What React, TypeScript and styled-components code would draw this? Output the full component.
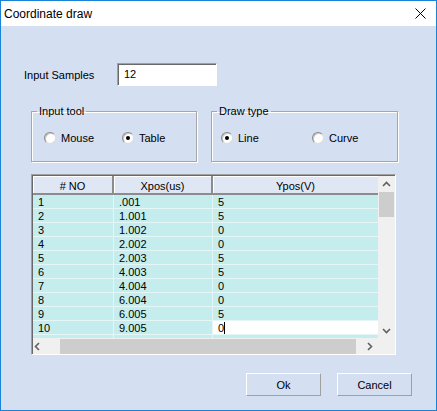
import styled, { createGlobalStyle } from "styled-components";

const GlobalStyle = createGlobalStyle`
  html, body {
    margin: 0;
    padding: 0;
    background: #ffffff;
  }
  * {
    box-sizing: border-box;
  }
`;

const rows: [string, string, string][] = [
  ["1", ".001", "5"],
  ["2", "1.001", "5"],
  ["3", "1.002", "0"],
  ["4", "2.002", "0"],
  ["5", "2.003", "5"],
  ["6", "4.003", "5"],
  ["7", "4.004", "0"],
  ["8", "6.004", "0"],
  ["9", "6.005", "5"],
  ["10", "9.005", "0"],
  ["", "", ""],
];

const Window = styled.div`
  width: 437px;
  height: 411px;
  border: 1px solid #1883d7;
  background: #d4dff1;
  display: flex;
  flex-direction: column;
  font-family: "Liberation Sans", Arial, sans-serif;
  font-size: 11px;
  color: #000;
`;

const TitleBar = styled.div`
  height: 25px;
  background: #ffffff;
  display: flex;
  align-items: center;
  justify-content: space-between;
  padding: 0 10px 0 3px;
  font-size: 12px;
`;

const Body = styled.div`
  flex: 1;
  display: flex;
  flex-direction: column;
  padding: 37px 0 0 0;
`;

const SampleRow = styled.div`
  display: flex;
  align-items: center;
  padding-left: 23px;
  height: 23px;
`;

const SampleLabel = styled.span`
  width: 93px;
`;

const TextBox = styled.div`
  width: 100px;
  height: 23px;
  background: #fff;
  border-top: 1px solid #a0a0a0;
  border-left: 1px solid #a0a0a0;
  border-right: 1px solid #fff;
  border-bottom: 1px solid #fff;
  box-shadow: inset 1px 1px 0 #696969;
  padding: 4px 0 0 6px;
`;

const GroupRow = styled.div`
  display: flex;
  margin-top: 19px;
  padding-left: 30px;
  gap: 14px;
`;

const Group = styled.fieldset<{ $w: number }>`
  width: ${(p) => p.$w}px;
  height: 57px;
  margin: 0;
  padding: 0 0 3px 0;
  border: 1px solid #a6a6a6;
  box-shadow: inset 1px 1px 0 #fff, 1px 1px 0 #fff;
  display: flex;
  align-items: center;
`;

const Legend = styled.legend`
  margin-left: 5px;
  padding: 0 2px;
  font-size: 11px;
`;

const RadioLine = styled.div<{ $pad: number }>`
  display: flex;
  align-items: center;
  padding-left: ${(p) => p.$pad}px;
`;

const RadioItem = styled.label<{ $w: number }>`
  display: flex;
  align-items: center;
  width: ${(p) => p.$w}px;
`;

const RadioDot = styled.span<{ $checked?: boolean }>`
  width: 12px;
  height: 12px;
  border-radius: 50%;
  background: #fff;
  border: 1px solid;
  border-color: #8a8a8a #dcdcdc #dcdcdc #8a8a8a;
  box-shadow: inset 1px 1px 0 #c8c8c8;
  margin-right: 5px;
  display: flex;
  align-items: center;
  justify-content: center;
  &::after {
    content: "";
    width: 4px;
    height: 4px;
    border-radius: 50%;
    background: ${(p) => (p.$checked ? "#000" : "transparent")};
  }
`;

const TableFrame = styled.div`
  margin: 12px 0 0 30px;
  width: 365px;
  height: 181px;
  border-top: 1px solid #a0a0a0;
  border-left: 1px solid #a0a0a0;
  border-right: 1px solid #fff;
  border-bottom: 1px solid #fff;
  box-shadow: inset 1px 1px 0 #696969;
  padding: 1px 0 0 1px;
  display: grid;
  grid-template-columns: 345px 17px;
  grid-template-rows: 162px 16px;
`;

const GridArea = styled.div`
  display: flex;
  flex-direction: column;
  overflow: hidden;
  background: #d4dff1;
`;

const HeaderRow = styled.div`
  display: grid;
  grid-template-columns: 81px 99px 165px;
  height: 19px;
  flex-shrink: 0;
  border-bottom: 2px solid #8c8c8c;
  background: #dfe7f5;
`;

const HeaderCell = styled.div`
  display: flex;
  align-items: center;
  justify-content: center;
  padding-top: 2px;
  border-right: 2px solid #8c8c8c;
  box-shadow: inset 1px 1px 0 #fff;
  &:last-child {
    border-right: none;
  }
`;

const DataRow = styled.div`
  display: grid;
  grid-template-columns: 81px 99px 165px;
  height: 14px;
  flex-shrink: 0;
`;

const Cell = styled.div<{ $edit?: boolean }>`
  background: ${(p) => (p.$edit ? "#fff" : "#c6eded")};
  border-right: 1px solid #e4f6f6;
  border-bottom: 1px solid #e4f6f6;
  padding: 1px 0 0 5px;
  line-height: 12px;
  white-space: nowrap;
  &:last-child {
    border-right: none;
  }
`;

const Caret = styled.span`
  display: inline-block;
  width: 1px;
  height: 12px;
  background: #000;
  vertical-align: -2px;
`;

const VScroll = styled.div`
  background: #f0f0f0;
  display: flex;
  flex-direction: column;
  align-items: center;
  padding-top: 4px;
`;

const VThumb = styled.div`
  width: 15px;
  height: 25px;
  background: #cdcdcd;
  margin-top: 3px;
`;

const Spacer = styled.div`
  flex: 1;
`;

const HScroll = styled.div`
  background: #f0f0f0;
  display: flex;
  align-items: center;
`;

const HThumb = styled.div`
  width: 296px;
  height: 15px;
  background: #cdcdcd;
  margin-left: 18px;
`;

const Corner = styled.div`
  background: #f0f0f0;
`;

const ArrowBox = styled.div<{ $h?: number }>`
  width: 18px;
  height: ${(p) => (p.$h ? `${p.$h}px` : "auto")};
  display: flex;
  justify-content: center;
  align-items: center;
`;

const ButtonRow = styled.div`
  display: flex;
  justify-content: flex-end;
  gap: 16px;
  margin-top: 18px;
  padding-right: 24px;
`;

const Button = styled.div`
  width: 75px;
  height: 23px;
  display: flex;
  align-items: center;
  justify-content: center;
  background: #d4dff1;
  border-top: 1px solid #fff;
  border-left: 1px solid #fff;
  border-right: 1px solid #a0a0a0;
  border-bottom: 1px solid #a0a0a0;
`;

function Chevron({ dir }: { dir: "up" | "down" | "left" | "right" }) {
  const d = {
    up: "M1 6 L4.5 2.5 L8 6",
    down: "M1 3 L4.5 6.5 L8 3",
    left: "M6 1 L2.5 4.5 L6 8",
    right: "M3 1 L6.5 4.5 L3 8",
  }[dir];
  return (
    <svg width="9" height="9" viewBox="0 0 9 9">
      <path d={d} fill="none" stroke="#606060" strokeWidth="1.6" />
    </svg>
  );
}

export default function App() {
  return (
    <>
      <GlobalStyle />
      <Window>
        <TitleBar>
          <span>Coordinate draw</span>
          <svg width="11" height="11" viewBox="0 0 11 11">
            <path d="M0.5 0.5 L10.5 10.5 M10.5 0.5 L0.5 10.5" stroke="#000" strokeWidth="1" />
          </svg>
        </TitleBar>
        <Body>
          <SampleRow>
            <SampleLabel>Input Samples</SampleLabel>
            <TextBox>12</TextBox>
          </SampleRow>
          <GroupRow>
            <Group $w={166}>
              <Legend>Input tool</Legend>
              <RadioLine $pad={12}>
                <RadioItem $w={78}>
                  <RadioDot />
                  Mouse
                </RadioItem>
                <RadioItem $w={60}>
                  <RadioDot $checked />
                  Table
                </RadioItem>
              </RadioLine>
            </Group>
            <Group $w={187}>
              <Legend>Draw type</Legend>
              <RadioLine $pad={9}>
                <RadioItem $w={91}>
                  <RadioDot $checked />
                  Line
                </RadioItem>
                <RadioItem $w={60}>
                  <RadioDot />
                  Curve
                </RadioItem>
              </RadioLine>
            </Group>
          </GroupRow>
          <TableFrame>
            <GridArea>
              <HeaderRow>
                <HeaderCell># NO</HeaderCell>
                <HeaderCell>Xpos(us)</HeaderCell>
                <HeaderCell>Ypos(V)</HeaderCell>
              </HeaderRow>
              {rows.map(([no, x, y], i) => (
                <DataRow key={i}>
                  <Cell>{no}</Cell>
                  <Cell>{x}</Cell>
                  {i === 9 ? (
                    <Cell $edit>
                      {y}
                      <Caret />
                    </Cell>
                  ) : (
                    <Cell>{y}</Cell>
                  )}
                </DataRow>
              ))}
            </GridArea>
            <VScroll>
              <Chevron dir="up" />
              <VThumb />
              <Spacer />
              <ArrowBox $h={16}>
                <Chevron dir="down" />
              </ArrowBox>
            </VScroll>
            <HScroll>
              <Chevron dir="left" />
              <HThumb />
              <Spacer />
              <ArrowBox>
                <Chevron dir="right" />
              </ArrowBox>
            </HScroll>
            <Corner />
          </TableFrame>
          <ButtonRow>
            <Button>Ok</Button>
            <Button>Cancel</Button>
          </ButtonRow>
        </Body>
      </Window>
    </>
  );
}
